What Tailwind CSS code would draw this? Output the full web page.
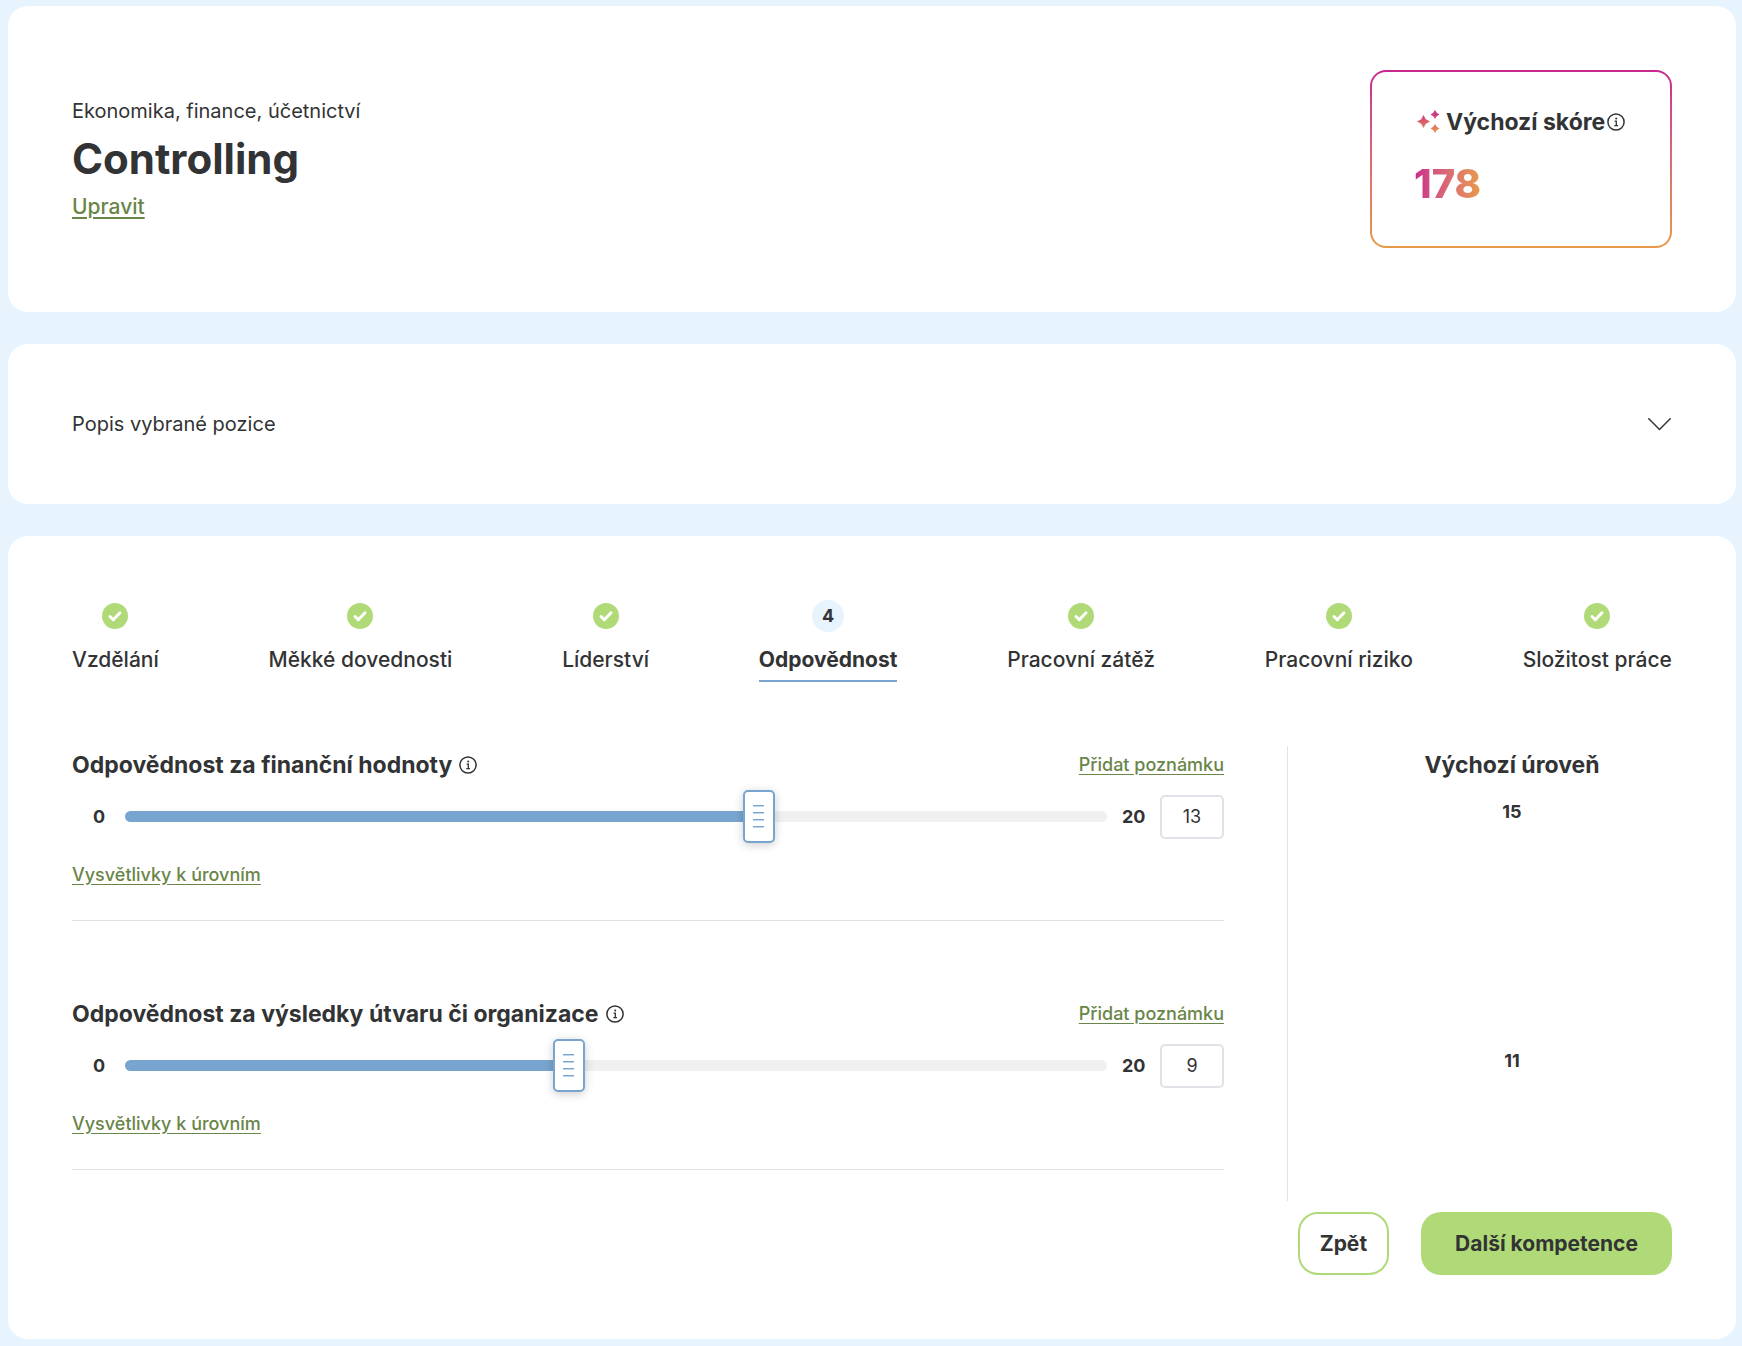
<!DOCTYPE html>
<html lang="cs">
<head>
  <meta charset="UTF-8" />
  <meta name="viewport" content="width=device-width, initial-scale=1.0"/>
  <title>Controlling</title>
  <script src="https://cdn.jsdelivr.net/npm/@tailwindcss/browser@4"></script>
</head>
<body class="bg-[#e7f4fe] text-[#323334] font-['Inter',sans-serif] text-xl leading-8 pt-[6px] pr-[6px] pb-[7px] pl-2">

  <!-- Shared icons -->
  <svg class="hidden">
    <symbol id="info" viewBox="0 0 18 18">
      <circle cx="9" cy="9" r="8.100" fill="none" stroke="currentColor" stroke-width="1.500"/>
      <circle cx="9.200" cy="5.600" r="1" fill="currentColor"/>
      <path d="M7.600 8.200h1.700v4.300M7.300 12.600h3.700" fill="none" stroke="currentColor" stroke-width="1.300"/>
    </symbol>
    <symbol id="check" viewBox="0 0 26 26">
      <circle cx="13" cy="13" r="13" fill="#b0da78"/>
      <path d="M8 13.500l3.300 3.300 6.700-7" fill="none" stroke="#fff" stroke-width="3" stroke-linecap="round" stroke-linejoin="round"/>
    </symbol>
  </svg>

  <main class="flex flex-col gap-8">

    <!-- Position header -->
    <section class="bg-white rounded-[20px] p-16 flex items-center justify-between">
      <div>
        <p>Ekonomika, finance, účetnictví</p>
        <h1 class="text-[42px] leading-[64px] font-bold">Controlling</h1>
        <a href="#" class="font-medium text-[21px] text-[#698548] underline decoration-2 underline-offset-3">Upravit</a>
      </div>
      <div class="w-[302px] rounded-2xl p-[2px] bg-linear-to-b from-[#c9278c] to-[#e89a49]">
        <div class="bg-white rounded-[14px] h-[174px] px-[42px] pt-[34px]">
          <div class="flex items-center whitespace-nowrap">
            <svg class="w-8 h-8 shrink-0" viewBox="0 0 32 32">
              <defs>
                <linearGradient id="spark" gradientUnits="userSpaceOnUse" x1="0" y1="5" x2="0" y2="27">
                  <stop offset="0" stop-color="#c9278c"/><stop offset="1" stop-color="#e89a49"/>
                </linearGradient>
              </defs>
              <path fill="url(#spark)" d="M9.500 9l2.300 4.200 4.200 2.300-4.200 2.300-2.300 4.200-2.300-4.200L3 15.500l4.200-2.300zM21 4l1.700 2.800 2.800 1.700-2.800 1.700L21 13l-1.700-2.800-2.800-1.700 2.800-1.700zM21 18l1.700 2.800 2.800 1.700-2.800 1.700L21 27l-1.700-2.800-2.800-1.700 2.800-1.700z"/>
            </svg>
            <h2 class="text-[23px] font-bold">Výchozí skóre</h2>
            <button type="button" aria-label="Informace" class="ml-[2px] shrink-0"><svg class="w-[18px] h-[18px]"><use href="#info"/></svg></button>
          </div>
          <p class="w-fit mt-[22px] text-[40px] leading-[48px] font-extrabold text-transparent bg-clip-text bg-linear-to-r from-[#c9278c] to-[#e89a49]">178</p>
        </div>
      </div>
    </section>

    <!-- Position description -->
    <section class="bg-white rounded-[20px] p-16">
      <button type="button" class="w-full flex items-center justify-between text-left" aria-expanded="false">
        Popis vybrané pozice
        <svg class="w-6 h-6" viewBox="0 0 24 24" fill="none" stroke="currentColor" stroke-width="1.500" stroke-linecap="round"><path d="M.8 6.800L11.500 17.500 22.200 6.800"/></svg>
      </button>
    </section>

    <!-- Competences -->
    <section class="bg-white rounded-[20px] p-16">
      <nav>
        <ol class="flex justify-between font-medium text-[21px]">
          <li><a href="#" class="flex flex-col items-center gap-3"><span class="h-8 flex items-center"><svg class="w-[26px] h-[26px]"><use href="#check"/></svg></span>Vzdělání</a></li>
          <li><a href="#" class="flex flex-col items-center gap-3"><span class="h-8 flex items-center"><svg class="w-[26px] h-[26px]"><use href="#check"/></svg></span>Měkké dovednosti</a></li>
          <li><a href="#" class="flex flex-col items-center gap-3"><span class="h-8 flex items-center"><svg class="w-[26px] h-[26px]"><use href="#check"/></svg></span>Líderství</a></li>
          <li><a href="#" class="flex flex-col items-center gap-3 font-bold pb-1 border-b-2 border-[#78a5cf]" aria-current="step"><span class="w-8 h-8 rounded-full bg-[#e7f4fe] flex items-center justify-center text-lg">4</span>Odpovědnost</a></li>
          <li><a href="#" class="flex flex-col items-center gap-3"><span class="h-8 flex items-center"><svg class="w-[26px] h-[26px]"><use href="#check"/></svg></span>Pracovní zátěž</a></li>
          <li><a href="#" class="flex flex-col items-center gap-3"><span class="h-8 flex items-center"><svg class="w-[26px] h-[26px]"><use href="#check"/></svg></span>Pracovní riziko</a></li>
          <li><a href="#" class="flex flex-col items-center gap-3"><span class="h-8 flex items-center"><svg class="w-[26px] h-[26px]"><use href="#check"/></svg></span>Složitost práce</a></li>
        </ol>
      </nav>

      <div class="flex mt-16">
        <div class="flex-1 flex flex-col gap-[74px] pr-[63px] pb-[31px]">

          <div class="border-b border-[#e2e3e5] pb-[29px]">
            <div class="flex items-center justify-between h-[38px]">
              <div class="flex items-center gap-[7px]">
                <h3 class="text-[23px] font-bold"><label for="finance">Odpovědnost za finanční hodnoty</label></h3>
                <button type="button" aria-label="Informace"><svg class="w-[18px] h-[18px]"><use href="#info"/></svg></button>
              </div>
              <a href="#" class="text-lg font-medium text-[#698548] underline underline-offset-3">Přidat poznámku</a>
            </div>
            <div class="flex items-center mt-[6px] text-lg">
              <span class="w-[53px] pl-[21px] font-bold">0</span>
              <input id="finance" type="range" min="0" max="20" value="13" style="--fill: 65%"
                class="flex-1 h-[53px] appearance-none bg-transparent [&::-webkit-slider-runnable-track]:h-[11px] [&::-webkit-slider-runnable-track]:rounded-full [&::-webkit-slider-runnable-track]:bg-[linear-gradient(to_right,#78a5cf_var(--fill),#f0f0f0_var(--fill))] [&::-webkit-slider-thumb]:appearance-none [&::-webkit-slider-thumb]:w-8 [&::-webkit-slider-thumb]:h-[53px] [&::-webkit-slider-thumb]:-mt-[21px] [&::-webkit-slider-thumb]:rounded-[5px] [&::-webkit-slider-thumb]:border-2 [&::-webkit-slider-thumb]:border-[#78a5cf] [&::-webkit-slider-thumb]:bg-white [&::-webkit-slider-thumb]:bg-[repeating-linear-gradient(#78a5cf_0_1px,#c3d7ea_1px_2px,#fff_2px_7px)] [&::-webkit-slider-thumb]:bg-size-[11px_23px] [&::-webkit-slider-thumb]:bg-center [&::-webkit-slider-thumb]:bg-no-repeat [&::-webkit-slider-thumb]:shadow-[0_2px_10px_rgb(0_0_0/0.2)]" />
              <span class="w-[53px] pl-[15px] font-bold">20</span>
              <input type="text" value="13" aria-label="Odpovědnost za finanční hodnoty, hodnota" class="w-16 h-11 border-2 border-[#dfe2e7] rounded-[5px] text-center" />
            </div>
            <a href="#" class="block w-fit mt-4 text-lg/8 font-medium text-[#698548] underline underline-offset-3">Vysvětlivky k úrovním</a>
          </div>

          <div class="border-b border-[#e2e3e5] pb-[29px]">
            <div class="flex items-center justify-between h-[38px]">
              <div class="flex items-center gap-[7px]">
                <h3 class="text-[23px] font-bold"><label for="results">Odpovědnost za výsledky útvaru či organizace</label></h3>
                <button type="button" aria-label="Informace"><svg class="w-[18px] h-[18px]"><use href="#info"/></svg></button>
              </div>
              <a href="#" class="text-lg font-medium text-[#698548] underline underline-offset-3">Přidat poznámku</a>
            </div>
            <div class="flex items-center mt-[6px] text-lg">
              <span class="w-[53px] pl-[21px] font-bold">0</span>
              <input id="results" type="range" min="0" max="20" value="9" style="--fill: 45%"
                class="flex-1 h-[53px] appearance-none bg-transparent [&::-webkit-slider-runnable-track]:h-[11px] [&::-webkit-slider-runnable-track]:rounded-full [&::-webkit-slider-runnable-track]:bg-[linear-gradient(to_right,#78a5cf_var(--fill),#f0f0f0_var(--fill))] [&::-webkit-slider-thumb]:appearance-none [&::-webkit-slider-thumb]:w-8 [&::-webkit-slider-thumb]:h-[53px] [&::-webkit-slider-thumb]:-mt-[21px] [&::-webkit-slider-thumb]:rounded-[5px] [&::-webkit-slider-thumb]:border-2 [&::-webkit-slider-thumb]:border-[#78a5cf] [&::-webkit-slider-thumb]:bg-white [&::-webkit-slider-thumb]:bg-[repeating-linear-gradient(#78a5cf_0_1px,#c3d7ea_1px_2px,#fff_2px_7px)] [&::-webkit-slider-thumb]:bg-size-[11px_23px] [&::-webkit-slider-thumb]:bg-center [&::-webkit-slider-thumb]:bg-no-repeat [&::-webkit-slider-thumb]:shadow-[0_2px_10px_rgb(0_0_0/0.2)]" />
              <span class="w-[53px] pl-[15px] font-bold">20</span>
              <input type="text" value="9" aria-label="Odpovědnost za výsledky útvaru či organizace, hodnota" class="w-16 h-11 border-2 border-[#dfe2e7] rounded-[5px] text-center" />
            </div>
            <a href="#" class="block w-fit mt-4 text-lg/8 font-medium text-[#698548] underline underline-offset-3">Vysvětlivky k úrovním</a>
          </div>
        </div>

        <!-- Default levels -->
        <div class="w-[385px] border-l border-[#e2e3e5] pl-16 text-center font-bold">
          <h3 class="text-[23px] leading-[38px]">Výchozí úroveň</h3>
          <p class="mt-3 text-lg/8">15</p>
          <p class="mt-[217px] text-lg/8">11</p>
        </div>
      </div>

      <div class="flex justify-end gap-8 mt-[11px] text-[21px] font-bold">
        <button type="button" class="h-[63px] px-5 rounded-[20px] border-2 border-[#b0da78]">Zpět</button>
        <button type="button" class="h-[63px] px-[34px] rounded-[20px] bg-[#b0da78]">Další kompetence</button>
      </div>
    </section>

  </main>

  <script>
    // keep the number box and the coloured part of the track in step with the slider
    document.querySelectorAll('input[type="range"]').forEach(function (range) {
      const box = range.parentElement.querySelector('input[type="text"]');
      range.addEventListener("input", function () {
        box.value = range.value;
        range.style.setProperty("--fill", (range.value / range.max) * 100 + "%");
      });
    });
  </script>
</body>
</html>
